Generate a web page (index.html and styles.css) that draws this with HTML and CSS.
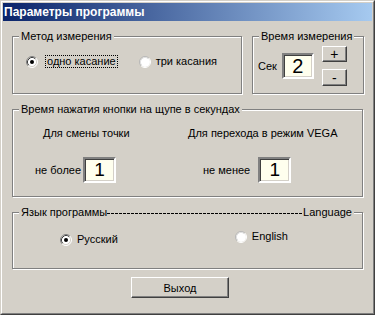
FILE: index.html
```html
<!DOCTYPE html>
<html lang="ru">
<head>
<meta charset="utf-8">
<title>Параметры программы</title>
<link rel="stylesheet" href="styles.css">
</head>
<body>
<div class="window">
  <div class="frame">
    <div class="titlebar"><span class="title">Параметры программы</span></div>
    <div class="content">
      <div class="row1">
        <fieldset class="group g-method">
          <legend>Метод измерения</legend>
          <div class="body method-body">
            <label class="radio">
              <svg class="rb" width="12" height="12" viewBox="0 0 12 12"><circle cx="6" cy="6" r="5" fill="#fff"/><path d="M2.11 9.89A5.5 5.5 0 0 1 9.89 2.11" stroke="#808080" fill="none"/><path d="M9.89 2.11A5.5 5.5 0 0 1 2.11 9.89" stroke="#fff" fill="none"/><path d="M2.82 9.18A4.5 4.5 0 0 1 9.18 2.82" stroke="#404040" fill="none"/><path d="M9.18 2.82A4.5 4.5 0 0 1 2.82 9.18" stroke="#d4d0c8" fill="none"/><circle cx="6" cy="6" r="2" fill="#000"/></svg>
              <span class="focus">одно касание</span>
            </label>
            <label class="radio r-three">
              <svg class="rb" width="12" height="12" viewBox="0 0 12 12"><circle cx="6" cy="6" r="5" fill="#fff"/><path d="M2.11 9.89A5.5 5.5 0 0 1 9.89 2.11" stroke="#b8b8b8" fill="none"/><path d="M9.89 2.11A5.5 5.5 0 0 1 2.11 9.89" stroke="#fff" fill="none"/><path d="M2.82 9.18A4.5 4.5 0 0 1 9.18 2.82" stroke="#e0e0e0" fill="none"/></svg>
              <span>три касания</span>
            </label>
          </div>
        </fieldset>
        <fieldset class="group g-time">
          <legend>Время измерения</legend>
          <div class="body time-body">
            <span class="sek">Сек</span>
            <div class="field big">2</div>
            <div class="spin">
              <div class="btn small">+</div>
              <div class="btn small minus">-</div>
            </div>
          </div>
        </fieldset>
      </div>

      <fieldset class="group g-press">
        <legend>Время нажатия кнопки на щупе в секундах</legend>
        <div class="body press-body">
          <div class="col col1">
            <div class="cap">Для смены точки</div>
            <div class="pair">
              <span>не более</span>
              <div class="field num">1</div>
            </div>
          </div>
          <div class="col col2">
            <div class="cap">Для перехода в режим VEGA</div>
            <div class="pair">
              <span>не менее</span>
              <div class="field num">1</div>
            </div>
          </div>
        </div>
      </fieldset>

      <fieldset class="group g-lang">
        <legend class="lang-legend"><span>Язык программы</span><span class="dashes"></span><span>Language</span></legend>
        <div class="body lang-body">
          <label class="radio r-ru">
            <svg class="rb" width="12" height="12" viewBox="0 0 12 12"><circle cx="6" cy="6" r="5" fill="#fff"/><path d="M2.11 9.89A5.5 5.5 0 0 1 9.89 2.11" stroke="#808080" fill="none"/><path d="M9.89 2.11A5.5 5.5 0 0 1 2.11 9.89" stroke="#fff" fill="none"/><path d="M2.82 9.18A4.5 4.5 0 0 1 9.18 2.82" stroke="#404040" fill="none"/><path d="M9.18 2.82A4.5 4.5 0 0 1 2.82 9.18" stroke="#d4d0c8" fill="none"/><circle cx="6" cy="6" r="2" fill="#000"/></svg>
            <span>Русский</span>
          </label>
          <label class="radio r-en">
            <svg class="rb" width="12" height="12" viewBox="0 0 12 12"><circle cx="6" cy="6" r="5" fill="#fff"/><path d="M2.11 9.89A5.5 5.5 0 0 1 9.89 2.11" stroke="#b8b8b8" fill="none"/><path d="M9.89 2.11A5.5 5.5 0 0 1 2.11 9.89" stroke="#fff" fill="none"/><path d="M2.82 9.18A4.5 4.5 0 0 1 9.18 2.82" stroke="#e0e0e0" fill="none"/></svg>
            <span>English</span>
          </label>
        </div>
      </fieldset>

      <div class="btn exit">Выход</div>
    </div>
  </div>
</div>
</body>
</html>
```

FILE: styles.css
```css
* { box-sizing: border-box; }
html, body { margin: 0; padding: 0; background: #d4d0c8; }
body {
  font-family: "Liberation Sans", Arial, sans-serif;
  font-size: 11px;
  color: #000;
}
.window {
  width: 375px;
  height: 315px;
  border: 1px solid;
  border-color: #d4d0c8 #404040 #404040 #d4d0c8;
  background: #d4d0c8;
}
.frame {
  height: 100%;
  border: 1px solid;
  border-color: #fff #808080 #808080 #fff;
  padding: 1px;
}
.titlebar {
  height: 18px;
  background: linear-gradient(to right, #0a246a, #a6caf0);
  display: flex;
  align-items: center;
  padding-left: 1px;
}
.title {
  color: #fff;
  font-weight: bold;
  font-size: 12px;
  line-height: 14px;
}
.content {
  padding: 9px 0 0 9px;
}
.row1 {
  display: flex;
  gap: 10px;
}
.group {
  margin: 0;
  padding: 0;
  min-width: 0;
  border: 1px solid #808080;
  box-shadow: 1px 1px 0 #fff, inset 1px 1px 0 #fff;
}
.group legend {
  margin-left: 6px;
  padding: 0 2px;
  line-height: 13px;
  background: #d4d0c8;
}
.body { display: flex; }

.g-method { width: 230px; }
.method-body {
  padding: 12px 0 25px 13px;
  align-items: center;
}
.radio {
  display: flex;
  align-items: center;
  line-height: 13px;
}
.rb { flex: none; display: block; }
.radio span { margin-left: 7px; }
.focus {
  border: 1px dotted #000;
  padding: 0 1px;
  line-height: 11px;
}
.r-three { margin-left: 21px; }
.r-three span { margin-left: 5px; }

.g-time { width: 112px; }
.time-body {
  padding: 3px 0 7px 5px;
  align-items: center;
}
.sek { margin-right: 5px; }
.field {
  background: #ffffee;
  border: 2px solid;
  border-color: #808080 #fff #fff #808080;
  box-shadow: inset 1px 1px 0 #404040, inset -1px -1px 0 #d4d0c8;
  display: flex;
  align-items: center;
  justify-content: center;
}
.big {
  width: 32px;
  height: 26px;
  font-size: 20px;
}
.spin {
  display: flex;
  flex-direction: column;
  gap: 7px;
  margin-left: 8px;
}
.btn {
  border: 1px solid;
  border-color: #fff #404040 #404040 #fff;
  box-shadow: inset -1px -1px 0 #808080;
  display: flex;
  align-items: center;
  justify-content: center;
  background: #d4d0c8;
}
.small {
  width: 25px;
  height: 16px;
  font-size: 14px;
}
.minus { height: 17px; }

.g-press {
  width: 351px;
  margin-top: 9px;
}
.press-body {
  padding: 11px 0 13px 22px;
}
.col {
  display: flex;
  flex-direction: column;
  align-items: flex-start;
  gap: 17px;
}
.col1 { width: 153px; }
.cap { line-height: 13px; }
.col1 .cap { margin-left: 8px; }
.pair {
  display: flex;
  align-items: center;
}
.col1 .pair .field { margin-left: 2px; }
.col2 .pair span { margin-left: 15px; }
.col2 .pair .field { margin-left: 8px; }
.num {
  width: 33px;
  height: 26px;
  font-size: 19px;
}

.g-lang {
  width: 351px;
  margin-top: 9px;
}
.lang-legend {
  display: flex;
  align-items: center;
  width: 335px;
}
.dashes {
  flex: 1;
  height: 1px;
  margin-top: 1px;
  background: repeating-linear-gradient(to right, #000 0 3px, transparent 3px 4px);
}
.lang-body {
  padding: 14px 0 22px 47px;
  align-items: center;
}
.r-ru span { margin-left: 5px; }
.r-en { margin-left: 117px; margin-top: -6px; }
.r-en span { margin-left: 5px; }

.exit {
  width: 98px;
  height: 21px;
  margin: 8px 0 0 119px;
}
```
